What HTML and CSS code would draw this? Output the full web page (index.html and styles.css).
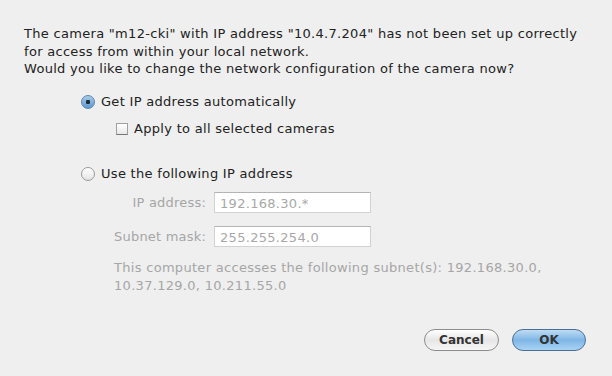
FILE: index.html
```html
<!DOCTYPE html>
<html lang="en">
  <head>
    <meta charset="UTF-8" />
    <title>Camera network setup</title>
    <link rel="stylesheet" href="styles.css">
  </head>
  <body>
    <div class="dialog">
      <p class="message">
        The camera "m12-cki" with IP address "10.4.7.204" has not been set up correctly<br>
        for access from within your local network.<br>
        Would you like to change the network configuration of the camera now?
      </p>

      <div class="options">
        <div class="option_row">
          <span class="radio radio_on"></span>
          <span>Get IP address automatically</span>
        </div>
        <div class="option_row check_row">
          <span class="checkbox"></span>
          <span>Apply to all selected cameras</span>
        </div>
        <div class="option_row manual_row">
          <span class="radio"></span>
          <span>Use the following IP address</span>
        </div>

        <div class="fields">
          <label>IP address:</label>
          <div class="field">192.168.30.*</div>
          <label>Subnet mask:</label>
          <div class="field">255.255.254.0</div>
        </div>

        <p class="subnets">
          This computer accesses the following subnet(s): 192.168.30.0,<br>
          10.37.129.0, 10.211.55.0
        </p>
      </div>

      <div class="buttons">
        <div class="btn">Cancel</div>
        <div class="btn btn_default">OK</div>
      </div>
    </div>
  </body>
</html>
```

FILE: styles.css
```css
  body {
    margin: 0;
    background: #efefef;
    font-family: "DejaVu Sans", sans-serif;
    font-size: 13px;
    letter-spacing: 0.3px;
    color: #222;
  }

  .dialog {
    padding: 25px 25px 0 24px;
  }

  /* 안내 문구 */
  .message {
    margin: 0;
    line-height: 17.5px;
  }

  .options {
    margin-left: 57px;
    margin-top: 15px;
  }

  .option_row {
    display: flex;
    align-items: center;
    gap: 6px;
    height: 18px;
  }

  .check_row {
    margin-left: 35px;
    margin-top: 9px;
  }

  .manual_row {
    margin-top: 27px;
  }

  .radio {
    flex: none;
    width: 14px;
    height: 14px;
    border-radius: 50%;
    border: 1px solid #9a9a9a;
    background: linear-gradient(#ffffff, #e4e4e4);
    box-sizing: border-box;
  }

  .radio_on {
    border-color: #5b86b0;
    background: radial-gradient(circle, #1d2a3a 0 2px, transparent 2.5px),
      linear-gradient(#a9cbe9, #5e98cf);
  }

  .checkbox {
    flex: none;
    width: 12px;
    height: 12px;
    border: 1px solid #a0a0a0;
    border-bottom-color: #777;
    background: linear-gradient(#ffffff, #e8e8e8);
    box-sizing: border-box;
  }

  /* 입력칸 */
  .fields {
    display: grid;
    grid-template-columns: 125px 157px;
    column-gap: 8px;
    row-gap: 13px;
    align-items: center;
    margin-top: 9px;
    color: #a6a6a6;
  }

  .fields label {
    text-align: right;
    letter-spacing: 0.2px;
  }

  .field {
    height: 21px;
    line-height: 21px;
    padding-left: 5px;
    background: #fff;
    border: 1px solid #d2d2d2;
    border-top-color: #b4b4b4;
    box-sizing: border-box;
    color: #a8a8a8;
  }

  .subnets {
    margin: 12px 0 0 33px;
    line-height: 18px;
    color: #a6a6a6;
  }

  /* 버튼 */
  .buttons {
    display: flex;
    justify-content: flex-end;
    gap: 13px;
    margin-top: 34px;
    padding-right: 1px;
  }

  .btn {
    width: 75px;
    height: 22px;
    line-height: 20px;
    text-align: center;
    border-radius: 11px;
    border: 1px solid #8c8c8c;
    background: linear-gradient(#ffffff, #e6e6e6 50%, #f6f6f6);
    box-sizing: border-box;
    font-size: 12px;
    letter-spacing: 0;
    font-weight: bold;
    color: #333;
  }

  .btn_default {
    width: 74px;
    border-color: #4a6f94;
    background: linear-gradient(#bfdcf4, #7fb6e6 50%, #a9d3f3);
  }
```
